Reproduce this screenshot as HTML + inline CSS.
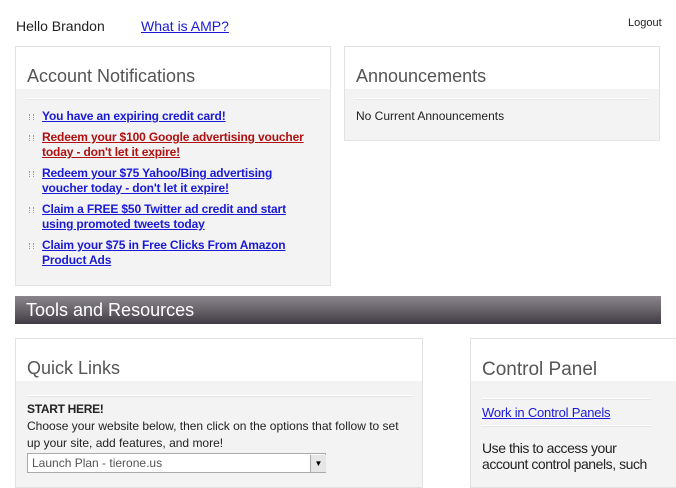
<!DOCTYPE html>
<html><head><style>
body{margin:0;width:676px;height:474px;overflow:hidden;background:#fff;font-family:"Liberation Sans",Arial,sans-serif;position:relative}
.a{position:absolute}
.box{position:absolute;border:1px solid #e2e2e2;background:#f3f3f3;box-sizing:border-box}
.box .hd{background:#fff;height:42px}
.box h2{margin:0;position:absolute;left:11px;top:19px;font-weight:normal;font-size:18px;color:#555}
.box .rule{position:absolute;left:11px;right:10px;border-top:1px solid #fff;border-bottom:1px solid #e4e4e4}
ul{list-style:none;margin:0;padding:0;position:absolute;left:26px;top:62px;width:290px}
li{font-size:12px;font-weight:bold;line-height:15px;margin-bottom:6px;position:relative;letter-spacing:-0.15px;white-space:nowrap}
li:before{content:"";position:absolute;left:-13px;top:5px;width:3px;height:6px;border-left:1px dotted #999;border-right:1px dotted #999}
a{color:#1a1ad6;text-decoration:underline}
</style></head><body>
<div class="a" style="left:16px;top:18px;font-size:14px;color:#222">Hello Brandon</div>
<div class="a" style="left:141px;top:18px;font-size:14px"><a>What is AMP?</a></div>
<div class="a" style="left:628px;top:17px;font-size:11px;color:#222">Logout</div>

<div class="box" style="left:15px;top:46px;width:316px;height:240px">
<div class="hd"></div><h2>Account Notifications</h2><div class="rule" style="top:51px"></div>
<ul>
<li><a>You have an expiring credit card!</a></li>
<li><a style="color:#b01010">Redeem your $100 Google advertising voucher<br>today - don't let it expire!</a></li>
<li><a>Redeem your $75 Yahoo/Bing advertising<br>voucher today - don't let it expire!</a></li>
<li><a>Claim a FREE $50 Twitter ad credit and start<br>using promoted tweets today</a></li>
<li><a>Claim your $75 in Free Clicks From Amazon<br>Product Ads</a></li>
</ul></div>

<div class="box" style="left:344px;top:46px;width:316px;height:95px">
<div class="hd"></div><h2>Announcements</h2><div class="rule" style="top:51px"></div>
<div class="a" style="left:11px;top:62px;font-size:12px;color:#222">No Current Announcements</div></div>

<div class="a" style="left:15px;top:296px;width:646px;height:28px;background:linear-gradient(#8a848c,#6f6a70 40%,#403a44)"></div>
<div class="a" style="left:26px;top:300px;font-size:18px;color:#fff">Tools and Resources</div>

<div class="box" style="left:15px;top:338px;width:408px;height:150px">
<div class="hd"></div><h2>Quick Links</h2><div class="rule" style="top:56px"></div>
<div class="a" style="left:11px;top:63px;font-size:12px;font-weight:bold;color:#222;letter-spacing:-0.3px">START HERE!</div>
<div class="a" style="left:11px;top:79px;width:400px;font-size:12px;line-height:17px;color:#222;white-space:nowrap">Choose your website below, then click on the options that follow to set<br>up your site, add features, and more!</div>
<div class="a" style="left:11px;top:114px;width:299px;height:20px;border:1px solid #aaa;background:#fff;font-size:12px;color:#555;box-sizing:border-box;padding:2px 4px">Launch Plan - tierone.us</div>
<div class="a" style="left:294px;top:116px;width:15px;height:17px;background:#e6e6e6;border-left:1px solid #aaa;font-size:8px;text-align:center;line-height:17px">▼</div>
</div>

<div class="box" style="left:470px;top:338px;width:220px;height:150px">
<div class="hd"></div><h2 style="font-size:19px;top:20px">Control Panel</h2><div class="rule" style="top:59px;right:38px"></div>
<div class="a" style="left:11px;top:66px;font-size:13px;letter-spacing:-0.2px"><a>Work in Control Panels</a></div>
<div class="rule" style="top:86px;right:38px"></div>
<div class="a" style="left:11px;top:101px;width:180px;font-size:14px;line-height:16px;color:#222;letter-spacing:-0.45px;white-space:nowrap">Use this to access your<br>account control panels, such</div>
</div>
</body></html>
